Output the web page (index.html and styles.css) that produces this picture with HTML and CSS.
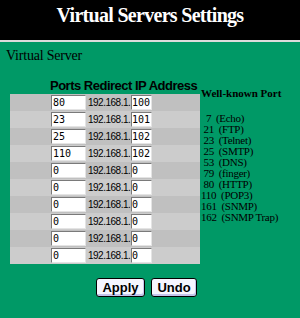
FILE: index.html
```html
<!DOCTYPE html>
<html>
<head>
<meta charset="utf-8">
<link rel="stylesheet" href="styles.css">
</head>
<body>
<div class="header">Virtual Servers Settings</div>
<div class="content">
  <div class="section-title">Virtual Server</div>
  <div class="main">
    <div class="vtable">
      <div class="thead">Ports Redirect IP Address</div>
      <div class="row odd"><input class="port" value="80"><span class="ip">192.168.1.</span><input class="host" value="100"></div>
      <div class="row even"><input class="port" value="23"><span class="ip">192.168.1.</span><input class="host" value="101"></div>
      <div class="row odd"><input class="port" value="25"><span class="ip">192.168.1.</span><input class="host" value="102"></div>
      <div class="row even"><input class="port" value="110"><span class="ip">192.168.1.</span><input class="host" value="102"></div>
      <div class="row odd"><input class="port" value="0"><span class="ip">192.168.1.</span><input class="host" value="0"></div>
      <div class="row even"><input class="port" value="0"><span class="ip">192.168.1.</span><input class="host" value="0"></div>
      <div class="row odd"><input class="port" value="0"><span class="ip">192.168.1.</span><input class="host" value="0"></div>
      <div class="row even"><input class="port" value="0"><span class="ip">192.168.1.</span><input class="host" value="0"></div>
      <div class="row odd"><input class="port" value="0"><span class="ip">192.168.1.</span><input class="host" value="0"></div>
      <div class="row even"><input class="port" value="0"><span class="ip">192.168.1.</span><input class="host" value="0"></div>
    </div>
    <div class="known">
      <div class="known-title">Well-known Port</div>
      <div class="known-list">
        <div>&nbsp;&nbsp;7&nbsp;&nbsp;(Echo)</div>
        <div>&nbsp;21&nbsp;&nbsp;(FTP)</div>
        <div>&nbsp;23&nbsp;&nbsp;(Telnet)</div>
        <div>&nbsp;25&nbsp;&nbsp;(SMTP)</div>
        <div>&nbsp;53&nbsp;&nbsp;(DNS)</div>
        <div>&nbsp;79&nbsp;&nbsp;(finger)</div>
        <div>&nbsp;80&nbsp;&nbsp;(HTTP)</div>
        <div>110&nbsp;&nbsp;(POP3)</div>
        <div>161&nbsp;&nbsp;(SNMP)</div>
        <div>162&nbsp;&nbsp;(SNMP Trap)</div>
      </div>
    </div>
  </div>
  <div class="buttons">
    <button class="btn btn-apply">Apply</button>
    <button class="btn btn-undo">Undo</button>
  </div>
</div>
</body>
</html>
```

FILE: styles.css
```css
html, body {
  margin: 0;
  padding: 0;
}
body {
  background: #009966;
  width: 300px;
  height: 318px;
  overflow: hidden;
}
.header {
  box-sizing: border-box;
  height: 42px;
  background: #000;
  border-bottom: 2px solid #dcdcdc;
  color: #fff;
  font-family: "Liberation Serif", serif;
  font-weight: bold;
  font-size: 20px;
  letter-spacing: -0.7px;
  line-height: 24px;
  padding-top: 3px;
  text-align: center;
}
.content {
  padding-top: 6px;
}
.section-title {
  font-family: "Liberation Serif", serif;
  font-size: 14px;
  line-height: 16px;
  padding-left: 6px;
  letter-spacing: -0.2px;
  color: #000;
}
.main {
  display: flex;
  align-items: flex-start;
}
.vtable {
  margin-left: 10px;
  width: 190px;
  flex: none;
}
.thead {
  font-family: "Liberation Sans", sans-serif;
  font-weight: bold;
  font-size: 13px;
  letter-spacing: -0.5px;
  line-height: 16px;
  padding-top: 14px;
  padding-left: 40px;
  white-space: nowrap;
  color: #000;
}
.row {
  height: 17px;
  display: flex;
  align-items: flex-start;
  padding-left: 41px;
  box-sizing: border-box;
}
.odd { background: #c0c0c0; }
.even { background: #cccccc; }
input {
  box-sizing: border-box;
  height: 15px;
  margin: 1px 0 0 0;
  padding: 0 0 0 1px;
  border: 1px solid;
  border-color: #7a7a7a #e4e4e4 #e4e4e4 #7a7a7a;
  background: #fff;
  font-family: "DejaVu Sans Mono", monospace;
  font-size: 10px;
  line-height: 13px;
  color: #000;
  outline: none;
}
.port { width: 35px; }
.host { width: 21px; padding-left: 0; }
.ip {
  display: inline-block;
  width: 44px;
  margin-left: 1px;
  font-family: "Liberation Sans", sans-serif;
  font-size: 10px;
  letter-spacing: -0.5px;
  line-height: 17px;
  padding-left: 1px;
  box-sizing: border-box;
  white-space: nowrap;
  color: #000;
}
.known {
  margin-left: 1px;
  padding-top: 23px;
  font-family: "Liberation Serif", serif;
  color: #000;
}
.known-title {
  font-weight: bold;
  font-size: 11px;
  line-height: 13px;
  white-space: nowrap;
}
.known-list {
  margin-top: 13px;
  font-size: 11px;
  line-height: 11px;
  white-space: nowrap;
  letter-spacing: -0.3px;
}
.buttons {
  display: flex;
  justify-content: center;
  gap: 6px;
  margin-top: 14px;
  padding-right: 7px;
}
.btn {
  box-sizing: border-box;
  height: 19px;
  padding: 0;
  border: 1px solid #000;
  border-radius: 3px;
  background: #f6f6ff;
  box-shadow: inset -1px -2px 0 #c4c4ec;
  font-family: "Liberation Sans", sans-serif;
  font-weight: bold;
  font-size: 13px;
  line-height: 16px;
  color: #000;
}
.btn-apply { width: 49px; }
.btn-undo { width: 46px; }
```
